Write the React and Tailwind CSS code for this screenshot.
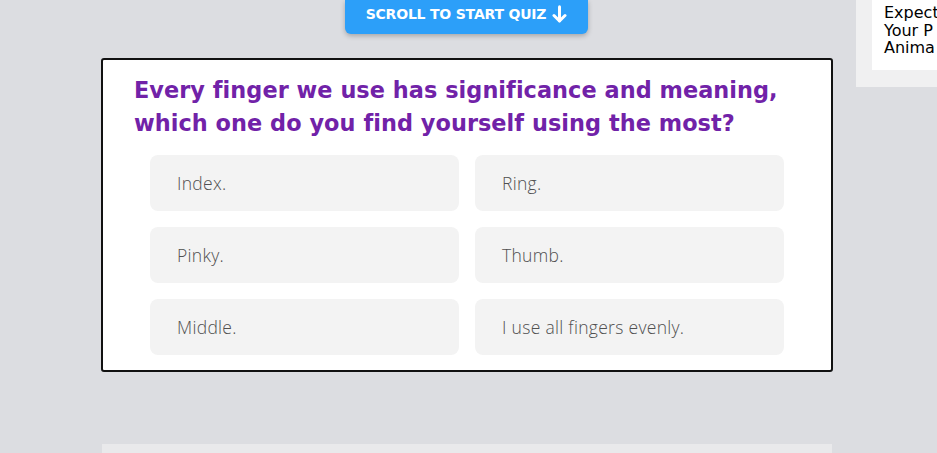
import React from 'react';

const options = ['Index.', 'Ring.', 'Pinky.', 'Thumb.', 'Middle.', 'I use all fingers evenly.'];

const ArrowDown = () => (
  <svg width="15" height="18" viewBox="0 0 15 18" fill="none" stroke="currentColor" strokeWidth="3" strokeLinecap="round" strokeLinejoin="round">
    <path d="M7.5 1.8v14" />
    <path d="M2 10.5l5.5 5.5 5.5-5.5" />
  </svg>
);

export default function App() {
  return (
    <div className="relative w-[937px] h-[453px] overflow-hidden bg-[#dcdde1]" style={{ fontFamily: '"DejaVu Sans", "Noto Sans", sans-serif' }}>
      <div className="flex">
        <div className="w-[856px] flex flex-col items-center">
          <button className="absolute left-[345px] top-0 w-[243px] h-[34px] pb-[6px] rounded-b-[6px] bg-[#2c9ff9] shadow-[0_2px_5px_rgba(0,0,0,0.25)] text-white text-[14px] font-bold flex items-center justify-center gap-[6px] tracking-[-0.2px]">
            SCROLL TO START QUIZ <ArrowDown />
          </button>
          <div className="ml-[101px] mt-[58px] w-[732px] self-start bg-white border-2 border-[#111] rounded-[3px] pt-[14px] pb-[15px] px-[31px]">
            <h2 className="text-[#7122a8] text-[22.4px] leading-[33px] font-bold whitespace-nowrap tracking-[0.05px]">
              Every finger we use has significance and meaning,<br />which one do you find yourself using the most?
            </h2>
            <div className="grid grid-cols-2 gap-[16px] mt-[15px] px-[16px]">
              {options.map((o) => (
                <div key={o} className="h-[56px] rounded-[8px] bg-[#f3f3f3] flex items-center pl-[27px] text-[17.5px] tracking-[0.3px] text-[#505050] font-light" style={{ fontFamily: '"Open Sans", sans-serif' }}>
                  {o}
                </div>
              ))}
            </div>
          </div>
          <div className="ml-[102px] mt-[72px] w-[730px] h-[40px] self-start bg-[#e9e9eb]" />
        </div>
        <div className="w-[81px] h-[87px] bg-[#f0f0f1] pl-[16px]">
          <div className="h-[70px] bg-white pl-[12px] pt-[4px] text-[16px] leading-[17.5px] font-medium text-black whitespace-nowrap overflow-hidden">
            Expect<br />Your P<br />Anima
          </div>
        </div>
      </div>
    </div>
  );
}
